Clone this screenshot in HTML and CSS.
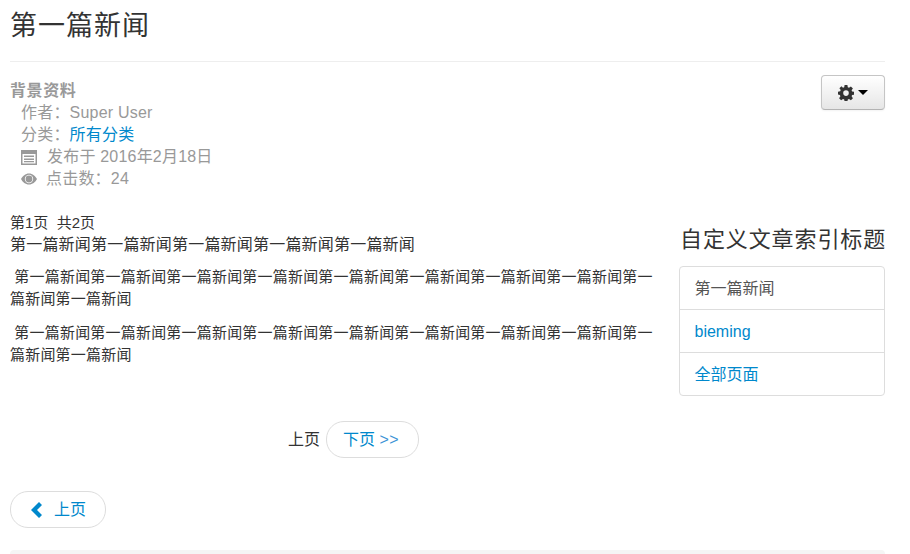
FILE: index.html
```html
<!DOCTYPE html>
<html lang="zh-CN">

<head>
    <meta charset="UTF-8">
    <meta name="viewport" content="width=device-width, initial-scale=1.0">
    <title>第一篇新闻</title>
    <link rel="stylesheet" href="styles.css">
</head>

<body>
    <div class="page">
        <div class="page-header">
            <h1>第一篇新闻</h1>
        </div>

        <div class="info-row">
            <dl class="article-info">
                <dt>背景资料</dt>
                <dd>作者：Super User</dd>
                <dd>分类：<a href="#">所有分类</a></dd>
                <dd>
                    <svg class="icon" viewBox="0 0 16 16">
                        <path d="M0 1h16v15H0z M1.500 5v9.500h13V5z M3 6.500h10V8H3z M3 9.500h10V11H3z M3 12h10v1.300H3z" fill-rule="evenodd" />
                    </svg>
                    <span class="icon-text">发布于 2016年2月18日</span>
                </dd>
                <dd>
                    <svg class="icon" viewBox="0 0 16 16">
                        <path d="M8 2.500C4.500 2.500 1.500 5 0 8c1.500 3 4.500 5.500 8 5.500s6.500-2.500 8-5.500c-1.500-3-4.500-5.500-8-5.500z M8 3.800a4.200 4.200 0 1 1 0 8.400a4.200 4.200 0 0 1 0-8.400z M8 4.600a3.400 3.400 0 1 0 0 6.800a3.400 3.400 0 0 0 0-6.800z" fill-rule="evenodd" />
                    </svg>
                    <span class="icon-text views">点击数：24</span>
                </dd>
            </dl>
            <button class="btn-tools">
                <svg class="gear" viewBox="0 0 16 16">
                    <path d="M6.600 0h2.800l.4 2.200 1.200.5L12.900 1.400l2 2-1.300 1.900.5 1.200 2.200.4v2.800l-2.200.4-.5 1.200 1.300 1.900-2 2-1.900-1.300-1.200.5-.4 2.200H6.600l-.4-2.200-1.200-.5-1.900 1.300-2-2 1.300-1.900-.5-1.200L0 9.500V6.700l2.200-.4.5-1.200L1.400 3.200l2-2L5 2.700l1.200-.5z M8 5.300a2.800 2.800 0 1 0 0 5.600a2.800 2.800 0 0 0 0-5.600z" fill-rule="evenodd" />
                </svg>
                <span class="caret"></span>
            </button>
        </div>

        <div class="columns">
            <div class="article">
                <div class="page-count">第1页&nbsp; 共2页</div>
                <div class="lead">第一篇新闻第一篇新闻第一篇新闻第一篇新闻第一篇新闻</div>
                <p>&nbsp;第一篇新闻第一篇新闻第一篇新闻第一篇新闻第一篇新闻第一篇新闻第一篇新闻第一篇新闻第一篇新闻第一篇新闻</p>
                <p>&nbsp;第一篇新闻第一篇新闻第一篇新闻第一篇新闻第一篇新闻第一篇新闻第一篇新闻第一篇新闻第一篇新闻第一篇新闻</p>
                <div class="pager-row">
                    <span>上页</span>
                    <a class="pill pill-next" href="#">下页 <span class="arrows">&gt;&gt;</span></a>
                </div>
            </div>
            <div class="sidebar">
                <h3>自定义文章索引标题</h3>
                <ul class="nav-list">
                    <li class="current">第一篇新闻</li>
                    <li><a href="#">bieming</a></li>
                    <li><a href="#">全部页面</a></li>
                </ul>
            </div>
        </div>

        <div class="prev-row">
            <a class="pill pill-prev" href="#">
                <svg class="chevron" viewBox="0 0 12 16">
                    <path d="M8 0L0 8l8 8 3-3-5-5 5-5z" />
                </svg>
                上页
            </a>
        </div>

        <div class="footer-bar"></div>
    </div>
</body>

</html>
```
FILE: styles.css
```css
body, html {
    margin: 0;
    padding: 0;
    height: 100%;
    overflow: hidden;
    background-color: #fff;
    color: #333;
    font-family: "Liberation Sans", "Noto Sans CJK SC", sans-serif;
    font-size: 16px;
}

a {
    color: #0088cc;
    text-decoration: none;
}

.page {
    width: 875px;
    padding-left: 10px;
}

.page-header {
    height: 61px;
    border-bottom: 1px solid #eee;
}

h1 {
    margin: 0;
    padding-top: 6px;
    font-size: 27px;
    line-height: 40px;
    font-weight: normal;
    letter-spacing: 1px;
    font-family: "Liberation Serif", "Noto Sans CJK SC", serif;
}

.info-row {
    display: flex;
    justify-content: space-between;
    align-items: flex-start;
    padding-top: 13px;
}

.article-info {
    margin: 0;
    padding-top: 5px;
    color: #999;
    line-height: 22px;
    letter-spacing: 0.2px;
}

.article-info dt {
    font-weight: bold;
    letter-spacing: 0.6px;
}

.article-info dd {
    margin: 0 0 0 11px;
    display: flex;
    align-items: center;
}

.icon {
    width: 16px;
    height: 16px;
    fill: #999;
}

.icon-text {
    margin-left: 10px;
}

.views {
    margin-left: 9px;
}

.btn-tools {
    display: flex;
    align-items: center;
    justify-content: center;
    gap: 4px;
    width: 64px;
    height: 35px;
    padding: 0;
    border: 1px solid #c5c5c5;
    border-bottom-color: #b3b3b3;
    border-radius: 4px;
    background: linear-gradient(#ffffff, #e6e6e6);
    box-shadow: inset 0 1px 0 rgba(255, 255, 255, 0.2), 0 1px 2px rgba(0, 0, 0, 0.05);
}

.gear {
    width: 16px;
    height: 16px;
    fill: #333;
}

.caret {
    width: 0;
    height: 0;
    border-top: 5px solid #000;
    border-left: 5px solid transparent;
    border-right: 5px solid transparent;
}

.columns {
    display: flex;
    justify-content: space-between;
    padding-top: 22px;
}

.article {
    width: 645px;
    line-height: 22px;
}

.lead {
    letter-spacing: 0.2px;
}

.page-count {
    font-size: 15px;
}

.article p {
    margin: 12px 0;
    font-size: 15px;
    line-height: 22px;
    letter-spacing: 0.2px;
}

.lead + p {
    margin-top: 10px;
}

.pager-row {
    display: flex;
    align-items: center;
    gap: 6px;
    padding: 43px 0 0 278px;
}

.pill {
    display: inline-block;
    height: 35px;
    line-height: 35px;
    border: 1px solid #ddd;
    border-radius: 18px;
    background: #fff;
}

.pill-next {
    padding: 0 19px 0 16px;
}

.arrows {
    letter-spacing: 0.5px;
    color: #3d94d6;
}

.sidebar {
    width: 206px;
}

.sidebar h3 {
    margin: 0;
    padding-top: 13px;
    font-size: 22px;
    line-height: 30px;
    font-weight: normal;
    letter-spacing: 0.9px;
    white-space: nowrap;
    margin-left: 1px;
    font-family: "Liberation Serif", "Noto Sans CJK SC", serif;
}

.nav-list {
    list-style: none;
    margin: 11px 0 0;
    padding: 0;
    border: 1px solid #ddd;
    border-radius: 4px;
}

.nav-list li {
    height: 42px;
    line-height: 44px;
    padding: 0 15px 0 14.5px;
    border-top: 1px solid #ddd;
}

.nav-list li:first-child {
    border-top: none;
}

.current {
    color: #555;
}

.prev-row {
    padding-top: 33px;
}

.pill-prev {
    display: inline-flex;
    align-items: center;
    gap: 11px;
    padding: 0 19px 0 20px;
}

.chevron {
    width: 12px;
    height: 16px;
    fill: #0088cc;
}

.footer-bar {
    height: 30px;
    margin-top: 22px;
    background: #f5f5f5;
    border-radius: 4px;
}
```
